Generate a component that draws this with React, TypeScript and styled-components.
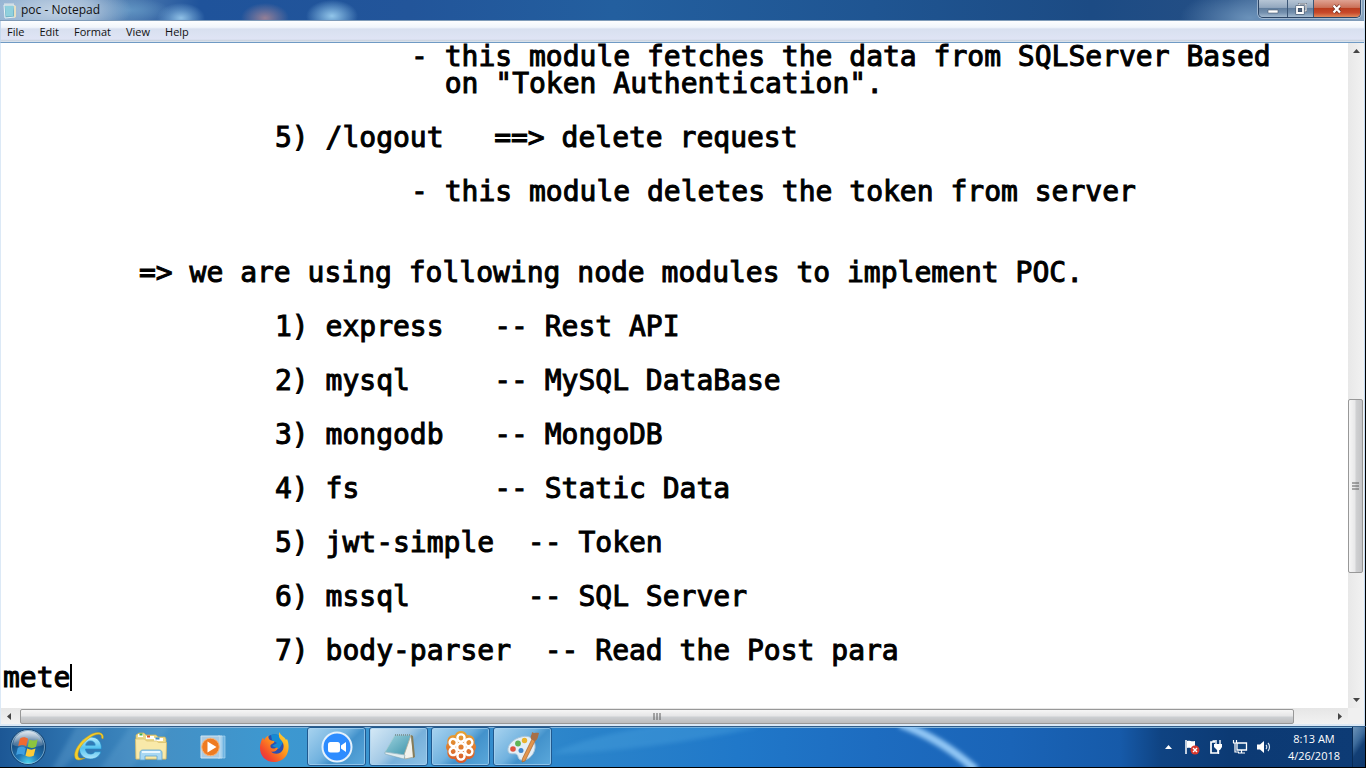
import React from "react";
import styled, { createGlobalStyle } from "styled-components";

const GlobalStyle = createGlobalStyle`
  * { box-sizing: border-box; }
  html, body, #root { height: 100%; }
  body {
    margin: 0;
    background: #000;
    font-family: "Open Sans", "Noto Sans", sans-serif;
    font-size: 12px;
    color: #111;
  }
  button { border: 0; padding: 0; background: none; font: inherit; color: inherit; }
  svg { display: block; }
`;

const Desktop = styled.div`
  display: flex;
  flex-direction: column;
  min-height: 100%;
  padding: 0 1px 1px 0;
`;

const Window = styled.main`
  flex: 1;
  display: flex;
  flex-direction: column;
  background: #dce9f6;
  border-right: 1px solid #c4dcf3;
`;

const TitleBar = styled.header`
  display: flex;
  align-items: center;
  height: 21px;
  padding: 0 3px 0 2px;
  border-bottom: 1px solid #7f9bb8;
  background:
    radial-gradient(ellipse 74px 26px at 58px 10px, #c3d3e4 0, #b0c5dccc 50%, transparent 100%),
    radial-gradient(ellipse 40px 12px at 130px 10px, #5f93c2 0, transparent 100%),
    radial-gradient(ellipse 24px 15px at 181px 18px, #8fc0e6 0, #7db1dc88 50%, transparent 100%),
    radial-gradient(ellipse 24px 15px at 265px 18px, #957f96 0, #8a7d9b88 50%, transparent 100%),
    radial-gradient(ellipse 26px 16px at 332px 16px, #92c6ea 0, #80b5df88 55%, transparent 100%),
    radial-gradient(ellipse 70px 30px at 1250px 18px, #6b92ba 0, transparent 100%),
    linear-gradient(90deg, #8fb0d0 0, #5b86b6 110px, #1f539b 200px, #22559a 30%, #235f9f 45%, #1f5592 64%, #1c4b84 80%, #254f85 90%, #89a5c0 100%);
`;

const Title = styled.h1`
  flex: 1;
  margin: 0 0 0 4px;
  font-size: 12px;
  line-height: 20px;
  font-weight: 400;
`;

const WindowButtons = styled.div`
  display: flex;
  align-self: flex-start;
  height: 18px;
  border: 1px solid #2c4565;
  border-top: 0;
  border-radius: 0 0 5px 5px;
  overflow: hidden;
  box-shadow: 0 0 0 1px #ffffff66;
`;

const WindowButton = styled.button<{ $wide?: boolean; $close?: boolean }>`
  display: grid;
  place-items: center;
  width: ${(p) => (p.$close ? "47px" : p.$wide ? "28px" : "26px")};
  border-left: ${(p) => (p.$wide ? "0" : "1px solid #3b5676")};
  background: ${(p) =>
    p.$close
      ? "linear-gradient(#dfa291 0, #cb7159 44%, #b83a1c 46%, #c8492a 75%, #e08a5c 100%)"
      : "linear-gradient(#b6c5d5 0, #93a8bf 44%, #5f7c9c 46%, #7591af 75%, #a3bad0 100%)"};
`;

const MenuBar = styled.nav`
  display: flex;
  align-items: center;
  height: 22px;
  padding-left: 6px;
  gap: 15px;
  border-left: 1px solid #c4d8ee;
  border-bottom: 1px solid #6f9ac4;
  background: linear-gradient(#fdfeff 0, #f1f5fb 30%, #d8e0f0 38%, #dfe4f5 86%, #c9d2dd 94%, #e2ebf4 100%);
`;

const MenuItem = styled.button`
  font-size: 11px;
  line-height: 18px;
`;

const Editor = styled.div`
  flex: 1;
  display: grid;
  grid-template-columns: 1fr 16px;
  grid-template-rows: 1fr 16px;
  margin: 0 0 2px 1px;
  background: #f0f0f0;
`;

const Page = styled.div`
  position: relative;
  display: flex;
  font-family: "DejaVu Sans Mono", "Liberation Mono", monospace;
  font-size: 28px;
  line-height: 27px;
  background: #fff;
`;

const Text = styled.textarea`
  flex: 1;
  min-width: 0;
  min-height: 648px;
  margin: 0;
  padding: 0 0 0 2px;
  border: 0;
  outline: 0;
  resize: none;
  overflow: hidden;
  background: transparent;
  color: #000;
  font: inherit;
  white-space: pre;
  tab-size: 136px;
  -webkit-text-stroke: 1px #000;
`;

const Caret = styled.span`
  position: absolute;
  left: calc(4ch + 2px);
  top: calc(23 * 27px);
  width: 2px;
  height: 27px;
  background: #000;
`;

const ScrollBar = styled.div<{ $vertical?: boolean }>`
  display: flex;
  flex-direction: ${(p) => (p.$vertical ? "column" : "row")};
  background: ${(p) =>
    p.$vertical ? "linear-gradient(90deg, #e8e8e8, #f2f2f2)" : "linear-gradient(#e6e6e6, #f2f2f2)"};
`;

const ScrollArrow = styled.button`
  display: grid;
  place-items: center;
  flex: 0 0 17px;
`;

const Track = styled.div<{ $size: number }>`
  flex: ${(p) => p.$size} 1 0;
`;

const Thumb = styled.div<{ $size: number; $vertical?: boolean }>`
  flex: ${(p) => p.$size} 1 0;
  display: grid;
  place-items: center;
  border: 1px solid #989898;
  border-radius: 2px;
  margin: ${(p) => (p.$vertical ? "0 1px 0 0" : "1px 0 0")};
  background: ${(p) =>
    p.$vertical
      ? "linear-gradient(90deg, #f6f6f6 0, #e8e8e9 45%, #cfd0d2 55%, #c4c4c6 100%)"
      : "linear-gradient(#f6f6f6 0, #e6e6e7 45%, #cccfd2 55%, #bcbcbd 100%)"};
`;

const TaskBar = styled.footer`
  position: relative;
  display: flex;
  align-items: stretch;
  height: 41px;
  margin-right: -1px;
  border-top: 1px solid #2f5d8a;
  box-shadow: inset 0 1px 0 #83b4da;
  overflow: hidden;
  background: linear-gradient(90deg, #1c5795 0, #2d72ae 5%, #4490c5 12%, #3d98d0 20%, #3a94d0 30%, #2a83ca 43%, #2078c9 54%, #1d6cc0 64%, #1a64b7 74%, #165aa9 82%, #0f4382 85%, #0c3a74 90%, #0d3b75 100%);
`;

const Sheen = styled.svg`
  position: absolute;
  inset: 0;
  width: 100%;
  height: 100%;
`;

const StartButton = styled.button`
  position: relative;
  display: grid;
  place-items: center;
  width: 56px;
`;

const Apps = styled.div`
  position: relative;
  flex: 1;
  display: flex;
  gap: 3px;
  padding: 0 3px 1px;
`;

const AppButton = styled.button<{ $open?: boolean; $active?: boolean }>`
  display: grid;
  place-items: center;
  width: 59px;
  border-radius: 3px;
  ${(p) =>
    p.$open &&
    `
    border: 1px solid #20598f;
    box-shadow: inset 0 0 0 1px #a9d4f1aa;
    background: ${
      p.$active
        ? "linear-gradient(135deg, #d5e9f6 0, #a4cae6 45%, #77b0da 60%, #8fc3e6 100%)"
        : "linear-gradient(135deg, #a8d3ef 0, #71b2df 45%, #4392cb 60%, #5ba8db 100%)"
    };
  `}
`;

const Tray = styled.div`
  position: relative;
  display: flex;
  align-items: center;
  gap: 4px;
  color: #fff;
`;

const TrayButton = styled.button`
  display: grid;
  place-items: center;
  width: 20px;
  height: 24px;
`;

const Clock = styled.time`
  width: 68px;
  margin-left: 2px;
  font-size: 11px;
  line-height: 17px;
  text-align: center;
  white-space: pre-line;
`;

const ShowDesktop = styled.button`
  align-self: stretch;
  width: 14px;
  border-left: 1px solid #082b55;
  border-right: 1px solid #000;
  background: linear-gradient(125deg, #6d94b9 0, #3d6b9b 35%, #133f75 55%, #0e386c 100%);
`;

const NOTE = [
  "\t\t\t- this module fetches the data from SQLServer Based",
  '\t\t\t  on "Token Authentication".',
  "",
  "\t\t5) /logout   ==> delete request",
  "",
  "\t\t\t- this module deletes the token from server",
  "",
  "",
  "\t=> we are using following node modules to implement POC.",
  "",
  "\t\t1) express   -- Rest API",
  "",
  "\t\t2) mysql     -- MySQL DataBase",
  "",
  "\t\t3) mongodb   -- MongoDB",
  "",
  "\t\t4) fs        -- Static Data",
  "",
  "\t\t5) jwt-simple  -- Token",
  "",
  "\t\t6) mssql       -- SQL Server",
  "",
  "\t\t7) body-parser  -- Read the Post para",
  "mete",
].join("\n");

const Arrow = ({ d }: { d: string }) => (
  <svg width="7" height="7" viewBox="0 0 7 7"><path d={d} fill="#454545" /></svg>
);

const NotepadSmall = () => (
  <svg width="15" height="17" viewBox="0 0 15 17">
    <path d="M2 3h10l1 12-10 1z" fill="#76b6c8" stroke="#e9f3f6" />
    <path d="M3 4h8v10H4z" fill="#8fd0dd" />
    <path d="M12 3l2 1v11l-2 1z" fill="#e7dfc1" />
    <path d="M3 1v3M5 1v3M7 1v3M9 1v3M11 1v3" stroke="#dfe6e8" />
  </svg>
);

const StartOrb = () => (
  <svg width="38" height="38" viewBox="0 0 38 38">
    <defs>
      <radialGradient id="orb" cx="50%" cy="96%" r="90%">
        <stop offset="0" stopColor="#4fd6ee" /><stop offset=".35" stopColor="#1f74b4" />
        <stop offset=".75" stopColor="#174d80" /><stop offset="1" stopColor="#7d9fbd" />
      </radialGradient>
      <linearGradient id="gloss" x2="0" y2="1"><stop stopColor="#fff" stopOpacity=".75" /><stop offset="1" stopColor="#fff" stopOpacity=".12" /></linearGradient>
    </defs>
    <circle cx="19" cy="19" r="17.5" fill="url(#orb)" stroke="#15436f" />
    <circle cx="19" cy="19" r="16.5" fill="none" stroke="#a6cce4" strokeOpacity=".6" />
    <path d="M4 17C5 8 12 3 19 3s14 5 15 14C28 20 10 20 4 17z" fill="url(#gloss)" />
    <path d="M11 10.500c3-2 5.500-1.500 8 .2l-1.800 7.600c-2.600-1.700-5-1.700-8-.2z" fill="#ef6a32" />
    <path d="M20.300 11.400c3 1.500 5.500 1.500 8.400-.1L27 18.700c-3 1.700-5.500 1.500-8.300.1z" fill="#8cc63f" />
    <path d="M8.800 19.700c3-1.500 5.400-1.400 8 .2l-1.700 7.300c-2.600-1.700-5-1.700-8-.2z" fill="#3f9fe0" />
    <path d="M18.200 20.500c2.800 1.500 5.300 1.500 8.300 0l-1.800 7.200c-3 1.600-5.500 1.500-8.200 0z" fill="#fccb38" />
  </svg>
);

const Explorer = () => (
  <svg width="34" height="34" viewBox="0 0 34 34">
    <defs><linearGradient id="ie" x2="0" y2="1"><stop stopColor="#b9eefd" /><stop offset=".5" stopColor="#53c2f0" /><stop offset="1" stopColor="#aee5fa" /></linearGradient></defs>
    <path d="M29.500 19H13.500c.2 3 2 5 5 5 2 0 3.500-.8 4.300-2.300h6.200C27.500 26.500 23.500 29 18.300 29 11.500 29 7.300 24.500 7.300 18S12 7 18.500 7c7 0 11.200 4.500 11 12zM13.700 15.200h9.500c-.2-2.700-2-4.300-4.700-4.300s-4.400 1.600-4.800 4.300z" fill="url(#ie)" stroke="#2387c4" strokeWidth=".7" />
    <path d="M31 9C33 3 26 0 17.500 5.300 8 11 1 21 3 27.500c1 3.500 5.500 3 10 .5-4 1-6.500.5-7-2C5 20 11 12 18.500 7.200 25 3 30.500 3.200 29.500 8z" fill="#f4cf2c" stroke="#c79a1a" strokeWidth=".5" />
  </svg>
);

const Folders = () => (
  <svg width="34" height="32" viewBox="0 0 34 32">
    <path d="M2 4l3-2h5l2 2h10l2 2h7l1 2v20H2z" fill="#ecd98a" stroke="#cfb45c" strokeWidth=".7" />
    <path d="M4 3h5v3H4z" fill="#fff" /><path d="M5.500 2.500h3v2h-3z" fill="#46ad50" />
    <path d="M12 5h8v3h-8z" fill="#fff" /><path d="M13 4.500h3v2h-3z" fill="#d75430" />
    <path d="M20 7h9v3h-9z" fill="#fff" /><path d="M21.500 6.500h4v2h-4z" fill="#3f8fc8" />
    <path d="M1.500 8h9l2 2h10l2 1.500h8L32 28H2z" fill="#f8e9a9" stroke="#d8bd67" strokeWidth=".7" />
    <path d="M6 29v-7c0-2 1-3 3-3h16c2 0 3 1 3 3v7h-5v-4H11v4z" fill="#a8d8f3" stroke="#5ba3d0" strokeWidth=".8" />
    <path d="M8 21h18" stroke="#e8f7ff" strokeWidth="2" />
  </svg>
);

const MediaPlayer = () => (
  <svg width="26" height="24" viewBox="0 0 26 24">
    <path d="M20 1h5v22h-5z" fill="#72b5e2" stroke="#a8d4ef" strokeWidth=".7" />
    <path d="M18 1h4v22h-4z" fill="#8fc5e8" stroke="#c5e3f4" strokeWidth=".7" />
    <path d="M1 1h19v22H1z" fill="#aacbe3" stroke="#cfe5f4" />
    <circle cx="10.500" cy="12" r="8.800" fill="#ee7b22" stroke="#f7b57a" />
    <path d="M7.500 6.500l9 5.500-9 5.500z" fill="#fff" />
  </svg>
);

const Firefox = () => (
  <svg width="32" height="32" viewBox="0 0 32 32">
    <defs>
      <linearGradient id="fox" x1="1" x2="0" y2="1"><stop stopColor="#ffe63b" /><stop offset=".4" stopColor="#ff9b1c" /><stop offset=".75" stopColor="#f4492c" /><stop offset="1" stopColor="#dc2460" /></linearGradient>
    </defs>
    <circle cx="15.500" cy="15" r="11.500" fill="#2e4fae" />
    <path d="M12 4c5-2 11 0 13 6l-5 8-7-3 5-3-5-3z" fill="#168bd4" />
    <path d="M20.500 1c1 4 5 4.500 6.500 8l1-1c4 9 1 22-12 23C7 31.500 1 25 1 17c0-5 2-9 3-10.500L5 9c1-2 3-4 4.500-4.500-.5 2 .5 3.500 1.500 4.500 1.500 1 4 .3 4.500 1.500-.3 2-3.500 2.500-4 4-.4 2 .8 2.800 2.500 3 2 .3 3-1.300 5-.5-1 3-4 4.200-7 3.500 3 3.500 10 3 12-2 1.800-4.500-.5-8-2.500-10C19.500 6.500 19.500 3 20.500 1z" fill="url(#fox)" />
  </svg>
);

const Zoom = () => (
  <svg width="32" height="32" viewBox="0 0 32 32">
    <circle cx="16" cy="16" r="14.500" fill="#2d8cff" stroke="#e4f1fc" strokeWidth="2" />
    <rect x="7" y="11" width="12" height="10.500" rx="2.500" fill="#fff" />
    <path d="M20 14.500l5-3.500v10l-5-3.500z" fill="#fff" />
  </svg>
);

const NotepadLarge = () => (
  <svg width="34" height="32" viewBox="0 0 34 32">
    <defs><linearGradient id="pad" x2="1" y2="1"><stop stopColor="#9ed3df" /><stop offset="1" stopColor="#3d93aa" /></linearGradient></defs>
    <path d="M13 4h16l-6 20L3 21z" fill="url(#pad)" stroke="#a9ced6" strokeWidth=".8" />
    <path d="M29 4l3 22-9 2-1-4z" fill="#f3f2ec" stroke="#aba895" strokeWidth=".8" />
    <path d="M29 4l2 1 2 21-2 1z" fill="#867c59" />
    <path d="M3 21l20 3-1 4L3 23z" fill="#e1ecef" stroke="#78a1ae" strokeWidth=".5" />
    <path d="M13 4h16" stroke="#7f989f" strokeWidth="2" strokeDasharray="1 1" />
  </svg>
);

const Flower = () => (
  <svg width="32" height="34" viewBox="0 0 32 34">
    <defs><linearGradient id="petal" x2="0" y2="1"><stop stopColor="#e6a534" /><stop offset="1" stopColor="#d8562b" /></linearGradient></defs>
    <path d="M16 1c3 0 5 1.500 6 4 5-.5 8.500 3 7.500 8 2 2.500 2 5.500 0 8 1 5-2.500 8.500-7.500 8-1 2.500-3 4-6 4s-5-1.500-6-4c-5 .5-8.500-3-7.500-8-2-2.500-2-5.500 0-8C1.500 8 5 4.500 10 5c1-2.500 3-4 6-4z" fill="url(#petal)" />
    <g fill="none" stroke="#fff" strokeWidth="2.400">
      {[0, 60, 120, 180, 240, 300].map((a) => (
        <circle key={a} cx="16" cy="8" r="3.600" transform={`rotate(${a} 16 17)`} />
      ))}
      <circle cx="16" cy="17" r="3.800" />
    </g>
  </svg>
);

const Palette = () => (
  <svg width="34" height="32" viewBox="0 0 34 32">
    <path d="M15 6C24 3 30 9 29 17c-1 8-8 13-14 12-4-1-2-5-5-6-3-.8-7 1-8-3C1 14 7 8 15 6z" fill="#e3eff7" stroke="#a8c4d8" />
    <circle cx="7" cy="18" r="2.800" fill="#df5441" /><circle cx="12" cy="12.500" r="2.900" fill="#60b455" />
    <circle cx="18.500" cy="9.500" r="2.700" fill="#e9b32e" /><circle cx="15" cy="19.500" r="2.500" fill="#3f86cc" />
    <path d="M26 8l3 2-10 20-3 1 .5-3.500z" fill="#e2954d" stroke="#a7642b" strokeWidth=".7" />
    <path d="M25 8c-1-3 1-4 1-7 2 2 4 0 7 1-1 3-1 7-4 8z" fill="#a76f48" />
  </svg>
);

const Flag = () => (
  <svg width="16" height="16" viewBox="0 0 16 16">
    <path d="M2 1v14" stroke="#fff" strokeWidth="1.500" />
    <path d="M3 2c3-1 4 1 8 0v7c-4 1-5-1-8 0z" fill="#fff" />
    <circle cx="11" cy="11" r="4.500" fill="#d9372c" />
    <path d="M9 9l4 4M13 9l-4 4" stroke="#fff" strokeWidth="1.400" />
  </svg>
);

const Power = () => (
  <svg width="14" height="16" viewBox="0 0 14 16">
    <path d="M6 3H2v11h7v-3M3.500 2h3" fill="none" stroke="#fff" strokeWidth="1.700" />
    <path d="M5 5h8v3l-2 3H8L5 8z" fill="#fff" />
    <path d="M7 1v5M11 1v5M9.500 10v5" stroke="#fff" strokeWidth="1.400" />
  </svg>
);

const Network = () => (
  <svg width="16" height="16" viewBox="0 0 16 16">
    <path d="M5 4h9.500v7H5z" fill="#12447c" stroke="#fff" strokeWidth="1.300" />
    <path d="M6 14h7M9.500 11v3M1 4h4M1.500 1v3M4.500 1v3M3 4v9h4" fill="none" stroke="#fff" strokeWidth="1.200" />
  </svg>
);

const Speaker = () => (
  <svg width="16" height="16" viewBox="0 0 16 16">
    <path d="M1 5.500h3L8 2v12l-4-3.500H1z" fill="#fff" />
    <path d="M10 6c1 1 1 3 0 4M12 4c2 2 2 6 0 8" fill="none" stroke="#dce8f3" strokeWidth="1.200" />
  </svg>
);

const APPS = [
  { name: "Internet Explorer", Icon: Explorer },
  { name: "Windows Explorer", Icon: Folders },
  { name: "Windows Media Player", Icon: MediaPlayer },
  { name: "Firefox", Icon: Firefox },
  { name: "Zoom", Icon: Zoom, open: true },
  { name: "Notepad", Icon: NotepadLarge, open: true, active: true },
  { name: "GoToMeeting", Icon: Flower, open: true },
  { name: "Paint", Icon: Palette, open: true },
];

const TRAY = [
  { name: "Action Center", Icon: Flag },
  { name: "Power", Icon: Power },
  { name: "Network", Icon: Network },
  { name: "Volume", Icon: Speaker },
];

export default function App() {
  return (
    <>
      <GlobalStyle />
      <Desktop>
        <Window>
          <TitleBar>
            <NotepadSmall />
            <Title>poc - Notepad</Title>
            <WindowButtons>
              <WindowButton $wide aria-label="Minimize">
                <svg width="12" height="12" viewBox="0 0 12 12"><path d="M1 7h10v3H1z" fill="#fff" stroke="#4c5c70" strokeWidth=".6" /></svg>
              </WindowButton>
              <WindowButton aria-label="Restore">
                <svg width="12" height="12" viewBox="0 0 12 12">
                  <path d="M4 3V1h7v7H9" fill="none" stroke="#3d4b5e" strokeWidth="2" />
                  <path d="M4 3V1h7v7H9" fill="none" stroke="#fff" strokeWidth="1.200" />
                  <path d="M2 4h6v6H2z" fill="#4c627d" stroke="#3d4b5e" strokeWidth="2.800" />
                  <path d="M2 4h6v6H2z" fill="none" stroke="#fff" strokeWidth="1.800" />
                </svg>
              </WindowButton>
              <WindowButton $close aria-label="Close">
                <svg width="12" height="12" viewBox="0 0 12 12">
                  <path d="M2.500 2.500l6.500 7M9 2.500l-6.500 7" stroke="#6b2d20" strokeWidth="3.600" />
                  <path d="M2.500 2.500l6.500 7M9 2.500l-6.500 7" stroke="#fff" strokeWidth="2.300" />
                </svg>
              </WindowButton>
            </WindowButtons>
          </TitleBar>
          <MenuBar>
            {["File", "Edit", "Format", "View", "Help"].map((m) => <MenuItem key={m}>{m}</MenuItem>)}
          </MenuBar>
          <Editor>
            <Page>
              <Text aria-label="Document text" defaultValue={NOTE} spellCheck={false} wrap="off" />
              <Caret />
            </Page>
            <ScrollBar $vertical>
              <ScrollArrow aria-label="Scroll up"><Arrow d="M0 5l3.500-4L7 5z" /></ScrollArrow>
              <Track $size={340} />
              <Thumb $size={173} $vertical>
                <svg width="7" height="8" viewBox="0 0 7 8"><path d="M0 1h7M0 4h7M0 7h7" stroke="#5c5c5c" /></svg>
              </Thumb>
              <Track $size={118} />
              <ScrollArrow aria-label="Scroll down"><Arrow d="M0 2l3.500 4L7 2z" /></ScrollArrow>
            </ScrollBar>
            <ScrollBar>
              <ScrollArrow aria-label="Scroll left"><Arrow d="M5 0L1 3.500 5 7z" /></ScrollArrow>
              <Track $size={2} />
              <Thumb $size={1274}>
                <svg width="8" height="7" viewBox="0 0 8 7"><path d="M1 0v7M4 0v7M7 0v7" stroke="#5c5c5c" /></svg>
              </Thumb>
              <Track $size={37} />
              <ScrollArrow aria-label="Scroll right"><Arrow d="M2 0l4 3.500L2 7z" /></ScrollArrow>
            </ScrollBar>
          </Editor>
        </Window>
        <TaskBar>
          <Sheen viewBox="0 0 1366 40" preserveAspectRatio="none" aria-hidden="true">
            <defs>
              <filter id="soft" x="-20%" y="-50%" width="140%" height="200%"><feGaussianBlur stdDeviation="2" /></filter>
            </defs>
            <path d="M900 -3q40 14 76 46" fill="none" stroke="#92c7f5" strokeWidth="8" filter="url(#soft)" />
            <path d="M550 27Q590 8 660 -2L760 0Q650 24 550 27z" fill="#4ba3df" opacity=".4" filter="url(#soft)" />
            <path d="M52 42L76 0h26L62 42z" fill="#7db7df" opacity=".25" filter="url(#soft)" />
            <path d="M100 42L130 0h40l-40 42z" fill="#7db7df" opacity=".2" filter="url(#soft)" />
          </Sheen>
          <StartButton aria-label="Start"><StartOrb /></StartButton>
          <Apps>
            {APPS.map(({ name, Icon, open, active }) => (
              <AppButton key={name} aria-label={name} $open={open} $active={active}><Icon /></AppButton>
            ))}
          </Apps>
          <Tray>
            <TrayButton aria-label="Show hidden icons">
              <svg width="7" height="4" viewBox="0 0 7 4"><path d="M0 4l3.500-4L7 4z" fill="#fff" /></svg>
            </TrayButton>
            {TRAY.map(({ name, Icon }) => (
              <TrayButton key={name} aria-label={name}><Icon /></TrayButton>
            ))}
            <Clock>{"8:13 AM\n4/26/2018"}</Clock>
            <ShowDesktop aria-label="Show desktop" />
          </Tray>
        </TaskBar>
      </Desktop>
    </>
  );
}
